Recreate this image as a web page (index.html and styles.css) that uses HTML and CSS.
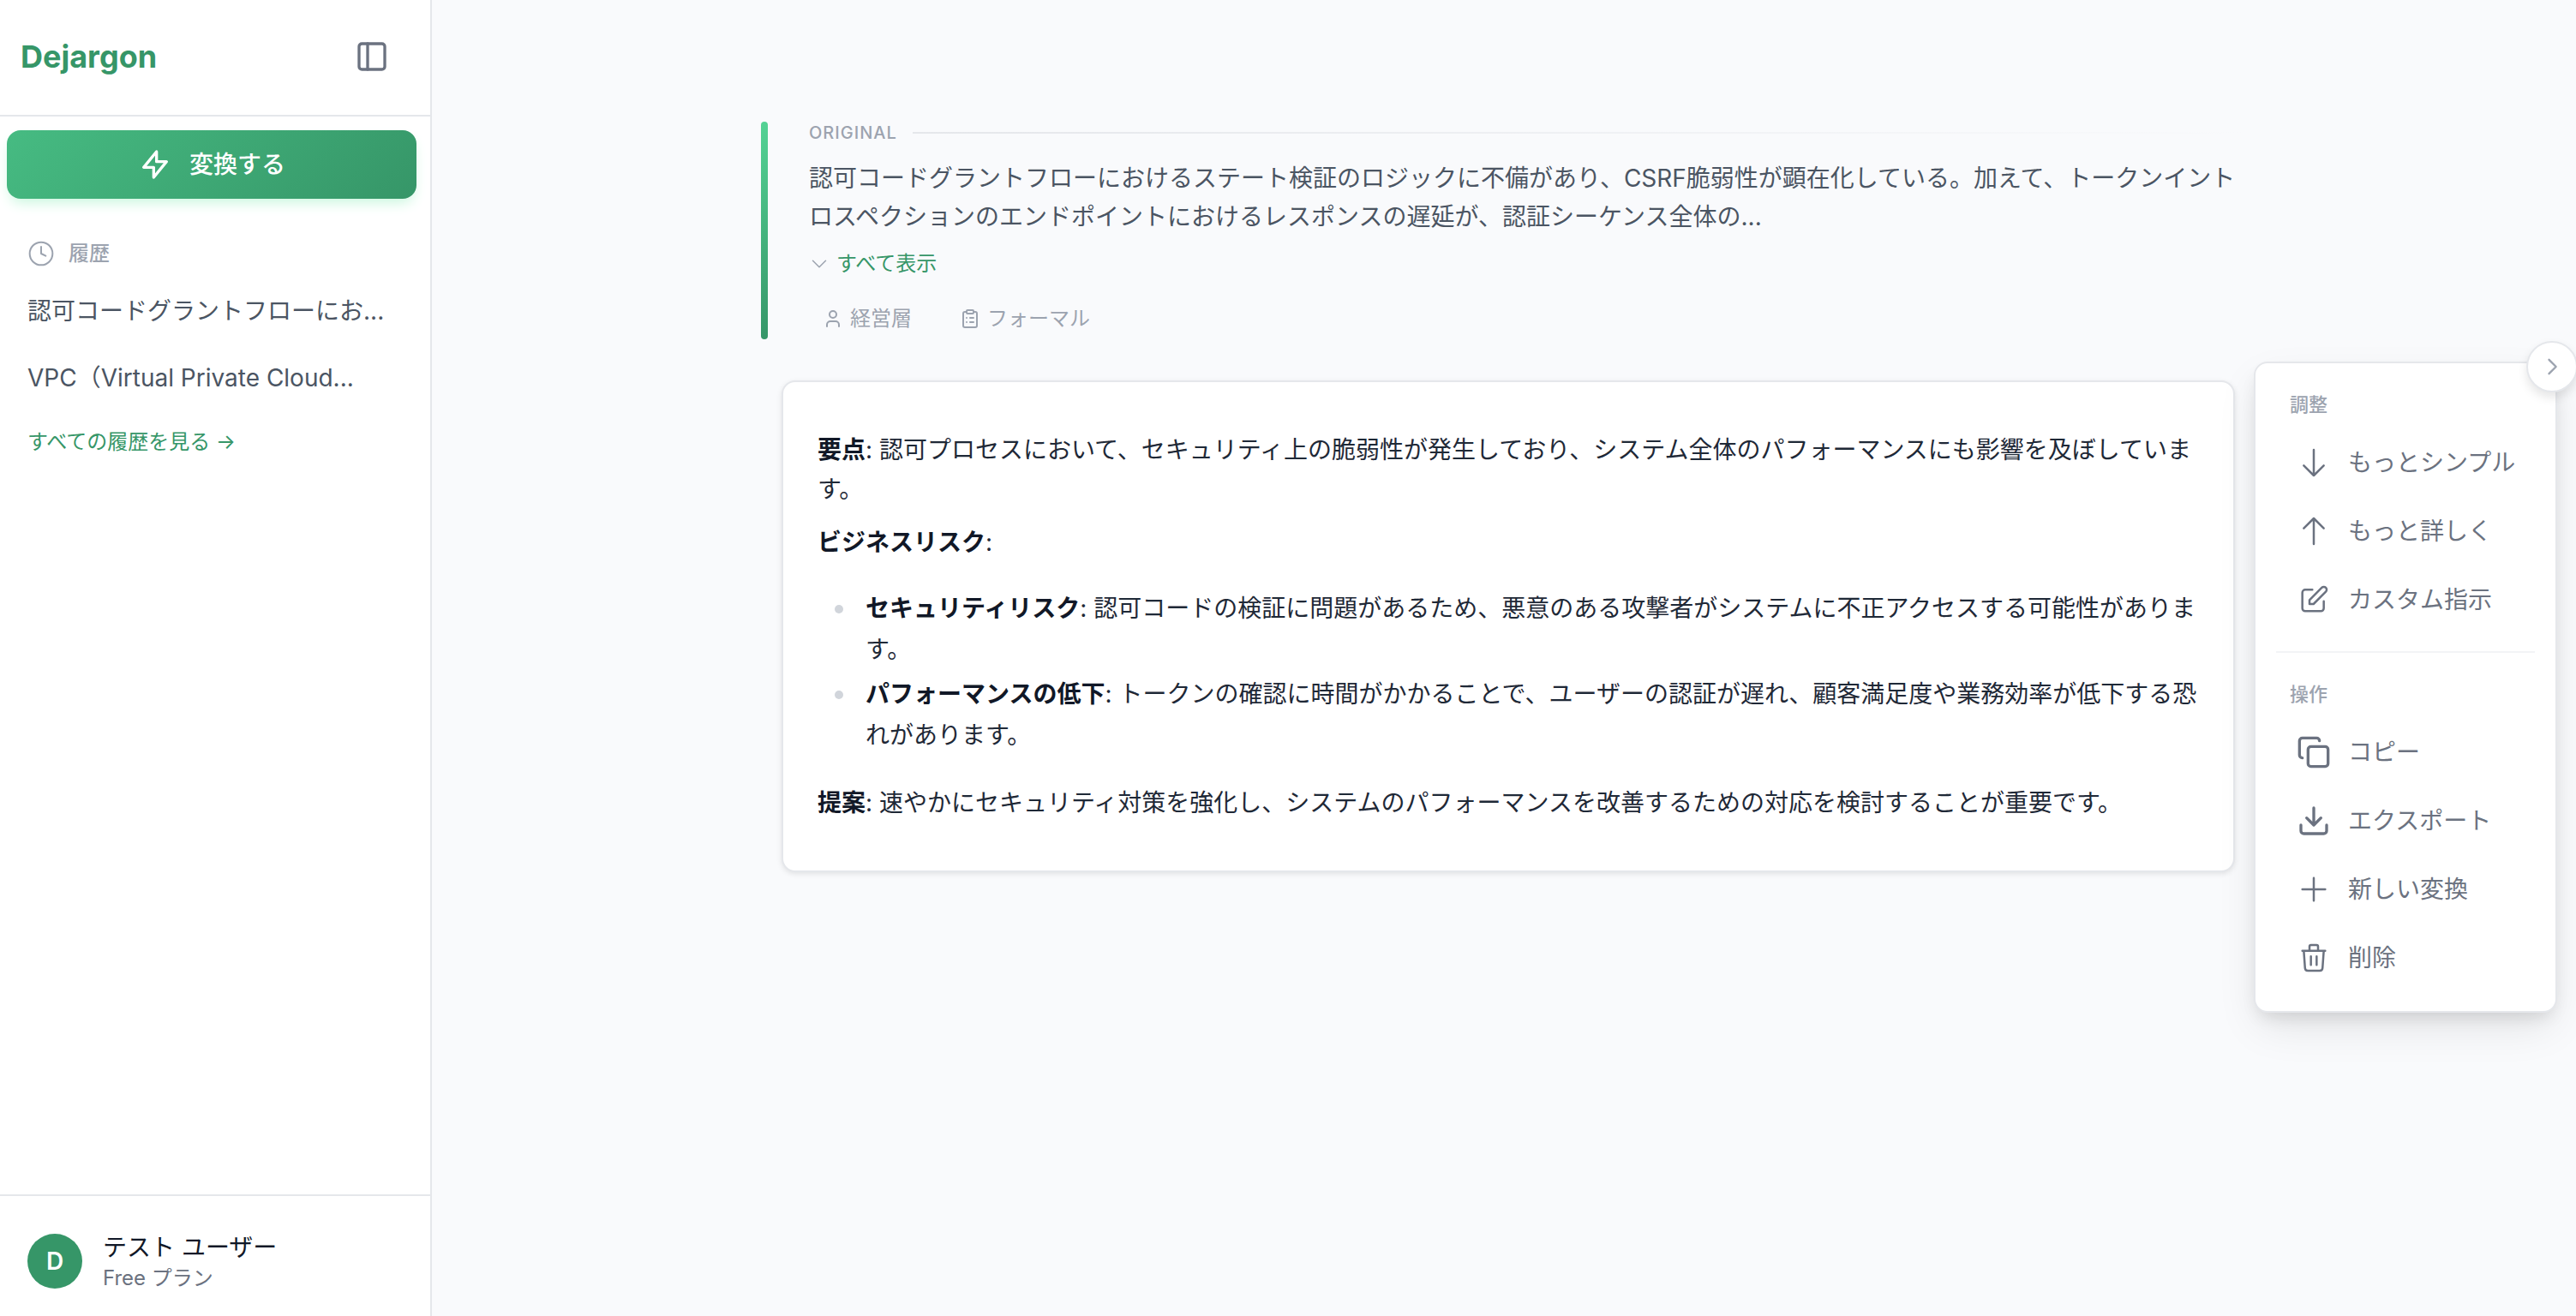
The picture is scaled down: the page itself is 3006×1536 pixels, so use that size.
FILE: index.html
```html
<!DOCTYPE html>
<html lang="ja">
<head>
<meta charset="utf-8">
<meta name="viewport" content="width=device-width, initial-scale=1">
<title>Dejargon</title>
<link rel="stylesheet" href="styles.css">
</head>
<body>
<aside class="sidebar">
  <header class="sidebar-header">
    <a class="logo" href="#">Dejargon</a>
    <button class="icon-button" type="button" aria-label="サイドバーを閉じる">
      <svg class="icon bold" viewBox="0 0 24 24"><rect x="3" y="3" width="18" height="18" rx="2"/><path d="M9 3v18"/></svg>
    </button>
  </header>
  <button class="convert" type="button">
    <svg class="icon bold" viewBox="0 0 24 24"><path d="M13 10V3L4 14h7v7l9-11h-7z"/></svg>
    変換する
  </button>
  <nav class="history" aria-label="履歴">
    <h2 class="history-title">
      <svg class="icon clock" viewBox="0 0 24 24"><circle cx="12" cy="12" r="10"/><path d="M12 6v6l4 2"/></svg>
      履歴
    </h2>
    <a class="history-item" href="#">認可コードグラントフローにお...</a>
    <a class="history-item" href="#">VPC（Virtual Private Cloud...</a>
    <a class="history-all" href="#">すべての履歴を見る →</a>
  </nav>
  <footer class="account">
    <span class="avatar">D</span>
    <div>
      <div class="account-name">テスト ユーザー</div>
      <div class="account-plan">Free プラン</div>
    </div>
  </footer>
</aside>

<main class="main">
  <div class="content">
    <section class="original">
      <div class="original-head"><h2 class="original-label">ORIGINAL</h2><span class="rule"></span></div>
      <p class="original-text">認可コードグラントフローにおけるステート検証のロジックに不備があり、CSRF脆弱性が顕在化している。加えて、トークンイントロスペクションのエンドポイントにおけるレスポンスの遅延が、認証シーケンス全体の...</p>
      <button class="show-all" type="button">
        <svg class="icon small" viewBox="0 0 24 24"><path d="M19.5 8.25l-7.5 7.5-7.5-7.5"/></svg>
        すべて表示
      </button>
      <div class="chips">
        <span class="chip">
          <svg class="icon small bold" viewBox="0 0 24 24"><path d="M19 21v-2a4 4 0 0 0-4-4H9a4 4 0 0 0-4 4v2"/><circle cx="12" cy="7" r="4"/></svg>
          経営層
        </span>
        <span class="chip">
          <svg class="icon small bold" viewBox="0 0 24 24"><rect x="8" y="2" width="8" height="4" rx="1"/><path d="M16 4h2a2 2 0 0 1 2 2v14a2 2 0 0 1-2 2H6a2 2 0 0 1-2-2V6a2 2 0 0 1 2-2h2M12 11h4M12 16h4M8 11h.01M8 16h.01"/></svg>
          フォーマル
        </span>
      </div>
    </section>

    <article class="result">
      <p><strong>要点</strong>: 認可プロセスにおいて、セキュリティ上の脆弱性が発生しており、システム全体のパフォーマンスにも影響を及ぼしています。</p>
      <p><strong>ビジネスリスク</strong>:</p>
      <ul>
        <li><div><strong>セキュリティリスク</strong>: 認可コードの検証に問題があるため、悪意のある攻撃者がシステムに不正アクセスする可能性があります。</div></li>
        <li><div><strong>パフォーマンスの低下</strong>: トークンの確認に時間がかかることで、ユーザーの認証が遅れ、顧客満足度や業務効率が低下する恐れがあります。</div></li>
      </ul>
      <p><strong>提案</strong>: 速やかにセキュリティ対策を強化し、システムのパフォーマンスを改善するための対応を検討することが重要です。</p>
    </article>
  </div>

  <aside class="panel">
    <button class="panel-toggle" type="button" aria-label="パネルを閉じる">
      <svg class="icon chevron" viewBox="0 0 24 24"><path d="M9 5l7 7-7 7"/></svg>
    </button>
    <h2 class="panel-label">調整</h2>
    <button class="action" type="button">
      <svg class="icon" viewBox="0 0 24 24"><path d="M19 14l-7 7m0 0l-7-7m7 7V3"/></svg>
      もっとシンプル
    </button>
    <button class="action" type="button">
      <svg class="icon" viewBox="0 0 24 24"><path d="M5 10l7-7m0 0l7 7m-7-7v18"/></svg>
      もっと詳しく
    </button>
    <button class="action" type="button">
      <svg class="icon" viewBox="0 0 24 24"><path d="M11 5H6a2 2 0 00-2 2v11a2 2 0 002 2h11a2 2 0 002-2v-5m-1.414-9.414a2 2 0 112.828 2.828L11.828 15H9v-2.828l8.586-8.586z"/></svg>
      カスタム指示
    </button>
    <hr class="divider">
    <h2 class="panel-label">操作</h2>
    <button class="action" type="button">
      <svg class="icon bold" viewBox="0 0 24 24"><rect x="8" y="8" width="14" height="14" rx="2"/><path d="M4 16c-1.1 0-2-.9-2-2V4c0-1.1.9-2 2-2h10c1.1 0 2 .9 2 2"/></svg>
      コピー
    </button>
    <button class="action" type="button">
      <svg class="icon bold" viewBox="0 0 24 24"><path d="M21 15v4a2 2 0 01-2 2H5a2 2 0 01-2-2v-4M7 10l5 5 5-5M12 15V3"/></svg>
      エクスポート
    </button>
    <button class="action" type="button">
      <svg class="icon" viewBox="0 0 24 24"><path d="M12 4v16m8-8H4"/></svg>
      新しい変換
    </button>
    <button class="action" type="button">
      <svg class="icon" viewBox="0 0 24 24"><path d="M19 7l-.867 12.142A2 2 0 0116.138 21H7.862a2 2 0 01-1.995-1.858L5 7m5 4v6m4-6v6m1-10V4a1 1 0 00-1-1h-4a1 1 0 00-1 1v3M4 7h16"/></svg>
      削除
    </button>
  </aside>
</main>
</body>
</html>
```
FILE: styles.css
```css
*, *::before, *::after { box-sizing: border-box; }

body {
  margin: 0;
  display: flex;
  min-height: 100vh;
  font-family: Inter, "Noto Sans CJK JP", sans-serif;
  font-size: 28px;
  line-height: 40px;
  color: #1f2937;
  background: #f9fafc;
}

h2, p, ul { margin: 0; padding: 0; }
h2 { font-weight: 500; }
a { color: inherit; text-decoration: none; }

button {
  border: 0;
  padding: 0;
  background: none;
  font: inherit;
  color: inherit;
  cursor: pointer;
}

.icon {
  flex: none;
  width: 40px;
  height: 40px;
  fill: none;
  stroke: currentColor;
  stroke-width: 1.5;
  stroke-linecap: round;
  stroke-linejoin: round;
}
.icon.bold { stroke-width: 2; }
.icon.small { width: 24px; height: 24px; }
.icon.clock { width: 32px; height: 32px; }
.icon.chevron { width: 28px; height: 28px; stroke-width: 2; }

/* Sidebar */
.sidebar {
  flex: none;
  display: flex;
  flex-direction: column;
  width: 504px;
  background: #fff;
  border-right: 2px solid #e5e7eb;
}

.sidebar-header {
  display: flex;
  align-items: center;
  justify-content: space-between;
  height: 136px;
  padding: 0 40px 2px 24px;
  border-bottom: 2px solid #e5e7eb;
}
.logo { font-size: 36px; font-weight: 700; color: #369668; }
.icon-button { display: flex; padding: 8px; color: #6b7280; }

.convert {
  display: flex;
  align-items: center;
  justify-content: center;
  gap: 20px;
  height: 80px;
  margin: 16px 16px 0 8px;
  border-radius: 16px;
  background: linear-gradient(135deg, #46bb82, #369668);
  box-shadow: 0 8px 16px -4px #c6f6dc;
  color: #fff;
  font-weight: 500;
}

.history {
  flex: 1;
  display: flex;
  flex-direction: column;
  padding: 48px 32px;
}
.history-title {
  display: flex;
  align-items: center;
  gap: 16px;
  margin-bottom: 12px;
  font-size: 24px;
  line-height: 32px;
  color: #9ca3af;
}
.history-item { padding: 19px 0; color: #4b5563; }
.history-all { padding-top: 16px; font-size: 24px; line-height: 40px; color: #369668; }

.account {
  display: flex;
  align-items: center;
  gap: 24px;
  padding: 40px 32px 28px;
  border-top: 2px solid #e5e7eb;
}
.avatar {
  display: flex;
  align-items: center;
  justify-content: center;
  width: 64px;
  height: 64px;
  border-radius: 50%;
  background: #369668;
  color: #fff;
  font-weight: 600;
}
.account-name { color: #111827; }
.account-plan { font-size: 24px; line-height: 32px; color: #6b7280; }

/* Main area */
.main {
  flex: 1;
  min-width: 0;
  display: grid;
  grid-template-columns: 384px minmax(0, 1fr) 354px;
  align-items: start;
  padding-right: 22px;
  overflow-x: hidden;
}

.content { grid-column: 2; padding: 142px 8px 64px 0; }

.original { position: relative; padding-left: 56px; }
.original::before {
  content: "";
  position: absolute;
  inset: 0 auto 0 0;
  width: 8px;
  border-radius: 4px;
  background: linear-gradient(#54d294, #369668);
}
.original-head { display: flex; align-items: center; gap: 18px; margin-bottom: 18px; }
.original-label { font-size: 20px; line-height: 26px; color: #9ca3af; letter-spacing: 1px; }
.rule { flex: 1; height: 2px; background: linear-gradient(90deg, #e5e7eb, transparent); }
.original-text { line-height: 45px; color: #4b5563; }

.show-all {
  display: flex;
  align-items: center;
  gap: 8px;
  margin-top: 16px;
  font-size: 24px;
  line-height: 32px;
  color: #369668;
}
.show-all .icon { color: #9ca3af; }

.chips { display: flex; gap: 24px; margin-top: 24px; }
.chip {
  display: flex;
  align-items: center;
  gap: 8px;
  padding: 8px 16px;
  font-size: 24px;
  line-height: 32px;
  color: #9ca3af;
}

.result {
  margin: 48px 14px 0 24px;
  padding: 56px 36px 56px 40px;
  background: #fff;
  border: 2px solid #e5e7eb;
  border-radius: 16px;
  box-shadow: 0 2px 6px rgba(0, 0, 0, .1);
}
.result p { line-height: 46px; }
.result p + p { margin-top: 16px; }
.result strong { font-weight: 700; color: #111827; }
.result ul { margin: 30px 0 32px; padding-left: 20px; list-style: none; }
.result li {
  display: grid;
  grid-template-columns: 10px minmax(0, 1fr);
  column-gap: 26px;
  line-height: 48px;
}
.result li + li { margin-top: 4px; }
.result li::before {
  content: "";
  width: 10px;
  height: 10px;
  margin-top: 20px;
  border-radius: 50%;
  background: #d1d5db;
}

/* Action panel */
.panel {
  grid-column: 3;
  position: relative;
  margin-top: 422px;
  padding: 24px 24px 22px;
  background: #fff;
  border: 2px solid #e5e7eb;
  border-radius: 16px;
  box-shadow: 0 20px 50px -6px rgba(0, 0, 0, .1), 0 10px 20px -6px rgba(0, 0, 0, .12);
}
.panel-toggle {
  position: absolute;
  top: -26px;
  right: -26px;
  display: flex;
  align-items: center;
  justify-content: center;
  width: 60px;
  height: 60px;
  border: 2px solid #e5e7eb;
  border-radius: 50%;
  background: #fff;
  box-shadow: 0 6px 12px rgba(0, 0, 0, .1);
  color: #9ca3af;
}
.panel-label {
  margin-bottom: 4px;
  padding: 8px 16px;
  font-size: 22px;
  line-height: 32px;
  color: #9ca3af;
}
.action {
  display: flex;
  align-items: center;
  gap: 20px;
  width: 100%;
  height: 80px;
  padding-left: 24px;
  white-space: nowrap;
  color: #6b7280;
}
.divider { height: 2px; margin: 20px 0 24px; border: 0; background: #f3f4f6; }
```
